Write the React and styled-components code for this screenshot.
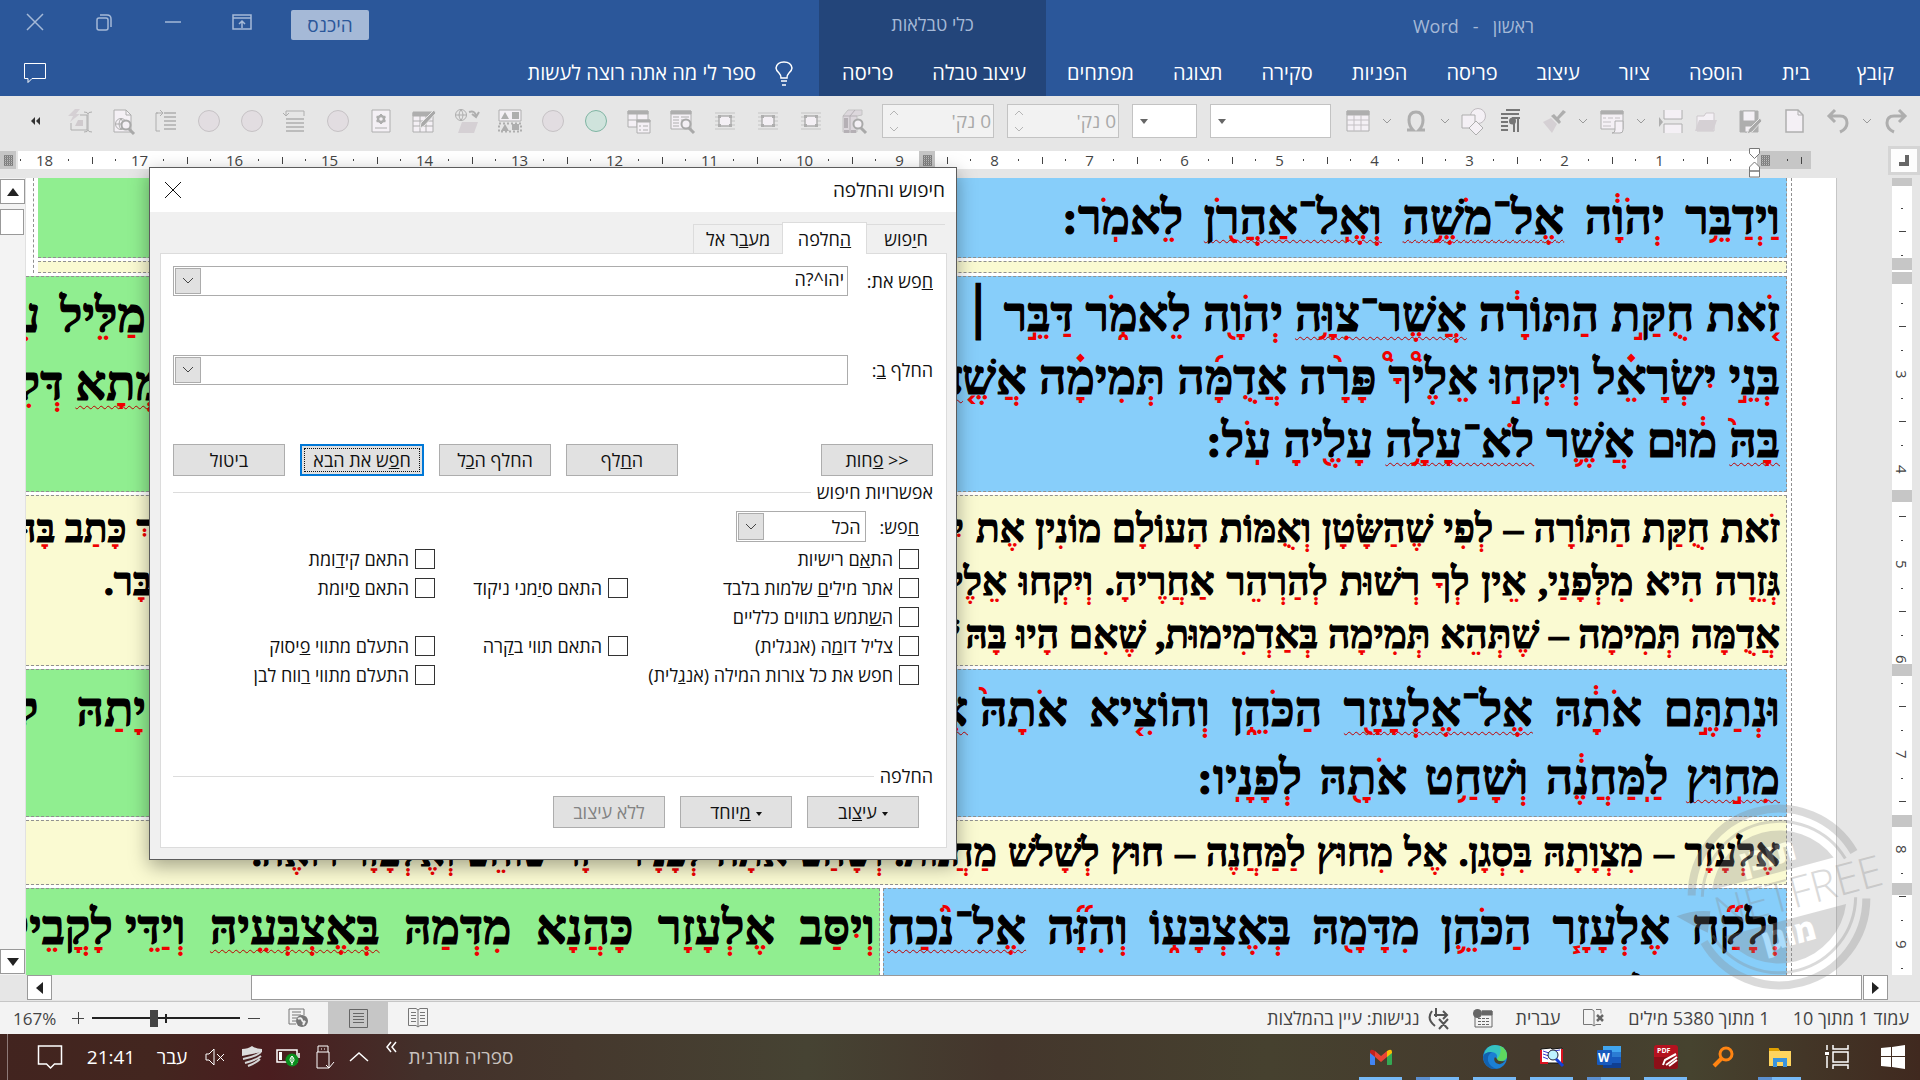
import React from 'react';
import styled, { createGlobalStyle, css } from 'styled-components';

const ui = '"Open Sans", "Noto Sans", sans-serif';
const scripture = '"Liberation Serif", serif';

const GlobalStyle = createGlobalStyle`
  * { box-sizing: border-box; }
  html, body { margin: 0; height: 100%; overflow: hidden; }
  body { font-family: ${ui}; background: #e6e6e6; }
  button, input, select { font: inherit; color: inherit; margin: 0; }
  svg { display: block; flex: none; overflow: visible; direction: ltr; }
`;

const Shell = styled.div`
  height: 100vh;
  display: flex;
  flex-direction: column;
`;

const PlainButton = styled.button`
  border: 0;
  padding: 0;
  background: none;
  display: flex;
  align-items: center;
  justify-content: center;
`;

/* ---------- title bar and ribbon tabs ---------- */

const Header = styled.header`
  direction: rtl;
  display: grid;
  grid-template-columns: 874fr 227fr 819fr;
  background: #2b579a;
  color: #fff;
`;

const HeaderColumn = styled.div`
  display: grid;
  grid-template-rows: 48px 48px;
  background: ${(p) => (p.$dark ? '#23457a' : 'transparent')};
`;

const Title = styled.div`
  display: flex;
  align-items: center;
  justify-content: ${(p) => (p.$center ? 'center' : 'flex-start')};
  padding-top: ${(p) => (p.$center ? 0 : 4)}px;
  padding-right: ${(p) => (p.$center ? 0 : 386)}px;
  font-size: 18px;
  white-space: pre;
  color: #a5b9d7;
`;

const Tabs = styled.nav`
  display: flex;
  align-items: center;
  gap: 39px;
  padding: 2px ${(p) => p.$inset}px 0 0;
`;

const TabLink = styled.a`
  padding-left: ${(p) => (p.$file ? 8 : 0)}px;
  color: #fff;
  text-decoration: none;
  font-size: 20px;
  line-height: 28px;
  white-space: nowrap;
`;

const WindowControls = styled.div`
  direction: ltr;
  display: flex;
  align-items: center;
  padding: 0 0 4px;
  color: #a5b9d7;
`;

const WindowButton = styled(PlainButton)`
  width: 69px;
  height: 44px;
`;

const SignIn = styled.button`
  margin: 6px 0 0 15px;
  width: 78px;
  height: 30px;
  border: 0;
  border-radius: 2px;
  padding: 0;
  background: #a5b9d7;
  color: #2b579a;
  font-size: 19px;
  line-height: 28px;
`;

const TellMe = styled.div`
  display: flex;
  align-items: center;
  justify-content: space-between;
  padding: 2px 26px 0 24px;
`;

const TellMeButton = styled(PlainButton)`
  gap: 19px;
  color: #fff;
  font-size: 20px;
  line-height: 28px;
`;

/* ---------- quick access toolbar ---------- */

const Toolbar = styled.div`
  height: 50px;
  display: flex;
  align-items: center;
  padding-right: 10px;
  flex: none;
  color: #aeaeae;
`;

const MoreButton = styled(PlainButton)`
  width: 58px;
  padding-left: 14px;
  color: #444;
`;

const ToolButton = styled(PlainButton)`
  width: 43px;
  height: 34px;
`;

const Fields = styled.div`
  display: flex;
  gap: 13px;
  margin-left: 7px;
`;

const Spinner = styled.label`
  width: 112px;
  height: 34px;
  border: 1px solid #c3c3c3;
  background: #f2f2f2;
  display: flex;
  align-items: center;
  padding: 0 2px 0 6px;
`;

const SpinnerInput = styled.input`
  flex: 1;
  min-width: 0;
  border: 0;
  padding: 0;
  background: none;
  direction: rtl;
  font-size: 19px;
  color: #a9a9a9;
`;

const ComboBox = styled.button`
  width: ${(p) => p.$w}px;
  height: 34px;
  border: 1px solid #c3c3c3;
  background: #fff;
  display: flex;
  align-items: center;
  padding: 0 0 0 7px;
`;

const Commands = styled.div`
  flex: 1;
  display: flex;
  align-items: center;
  gap: 8px;
  justify-content: flex-end;
`;

const Command = styled(PlainButton)`
  width: ${(p) => (p.$arrow ? 14 : 28)}px;
  height: 34px;
  margin-left: ${(p) => (p.$wide ? 8 : 0)}px;
`;

/* ---------- rulers ---------- */

const RulerRow = styled.div`
  height: 32px;
  display: flex;
  justify-content: space-between;
  flex: none;
`;

const Ruler = styled.div`
  direction: rtl;
  flex: 1;
  height: 18px;
  margin: 5px 77px 0 2px;
  display: flex;
  overflow: hidden;
  background: #fff;
  font-size: 15px;
  line-height: 18px;
  color: #444;
`;

const Hatch = styled.div`
  width: 16px;
  height: 18px;
  margin-top: ${(p) => (p.$flush ? 0 : 5)}px;
  justify-self: start;
  flex: none;
  display: flex;
  align-items: center;
  justify-content: center;
  background: #c6c6c6;
  &::before {
    content: '';
    width: 9px;
    height: 11px;
    background: repeating-linear-gradient(#8a8a8a 0 1px, transparent 1px 2px),
      repeating-linear-gradient(90deg, #777 0 1px, #bbb 1px 2px);
  }
`;

const RulerEnd = styled.div`
  width: 54px;
  flex: none;
  background: #c6c6c6;
  display: flex;
  align-items: center;
  justify-content: space-between;
  padding: 0 9px 0 0;
`;

const RulerStart = styled.div`
  width: 38px;
  flex: none;
  display: flex;
  align-items: center;
  padding-right: 26px;
`;

const RulerCell = styled.div`
  width: 95px;
  flex: none;
  display: grid;
  grid-template-columns: repeat(4, 1fr);
  align-items: center;
  justify-items: center;
`;

const Tick = styled.i`
  width: 1px;
  height: ${(p) => (p.$long ? 7 : 2)}px;
  background: #444;
`;

const IndentMarker = styled.div`
  position: absolute;
  right: 160px;
  top: 148px;
`;

const TabSelector = styled(PlainButton)`
  width: 32px;
  height: 29px;
  border: 3px solid #d5d5d5;
  background: #fdfdfd;
`;

/* ---------- document window ---------- */

const Workspace = styled.main`
  flex: 1;
  min-height: 0;
  display: flex;
`;

const VScroll = styled.div`
  width: 26px;
  display: flex;
  flex-direction: column;
  padding: 1px 1px 1px 0;
  background: #f3f3f3;
  border-right: 1px solid #e1e1e1;
`;

const ScrollButton = styled(PlainButton)`
  width: 25px;
  height: 25px;
  flex: none;
  border: 1px solid #999;
  background: #fff;
  color: #222;
`;

const VThumb = styled.div`
  height: 26px;
  margin: 5px 0 auto;
  border: 1px solid #999;
  background: #fff;
`;

const Page = styled.div`
  flex: 1;
  min-width: 0;
  direction: rtl;
  overflow: hidden;
  background: #fff;
  padding-right: 44px;
  border-right: 1px solid #c6c6c6;
`;

const OuterTable = styled.div`
  display: flex;
  flex-direction: column;
  gap: 3px;
  border-right: 1px dashed #909090;
  padding-right: 4px;
`;

const NestedTable = styled.div`
  display: flex;
  flex-direction: column;
  gap: 3px;
  margin-left: 7px;
  padding-left: 4px;
  border-left: 1px dashed #909090;
`;

const TableRow = styled.div`
  display: flex;
  gap: 3px;
`;

const fills = { blue: '#87cefa', green: '#90ee90', yellow: '#fafad2' };

const Cell = styled.div`
  ${(p) => (p.$first ? 'width: 904px; flex: none;' : 'flex: 1; min-width: 0;')}
  background: ${(p) => fills[p.$fill]};
  border: 1px dashed #909090;
  border-left-width: ${(p) => (p.$first ? 1 : 0)}px;
  border-top-width: ${(p) => (p.$open ? 0 : 1)}px;
  padding: ${(p) => p.$pad[0]}px ${(p) => (p.$fill === 'green' ? 4 : 6)}px ${(p) => p.$pad[1]}px 0;
  overflow: hidden;
  font-family: ${scripture};
  font-weight: 700;
  font-size: ${(p) => (p.$fill === 'yellow' ? 39 : 48)}px;
  line-height: ${(p) => p.$lh || 63}px;
`;

const Line = styled.div`
  display: flex;
  white-space: nowrap;
  gap: 12px;
`;

const Run = styled.div`
  flex: none;
  ${(p) =>
    p.$w &&
    css`
      width: ${p.$w}px;
      text-align-last: justify;
    `}
  ${(p) =>
    p.$tail !== undefined &&
    css`
      margin-right: auto;
      margin-left: ${p.$tail}px;
    `}
`;

const PointedWord = styled.span`
  position: relative;
  display: inline-block;
  color: #f00000;
  ${(p) =>
    p.$flag &&
    css`
      text-decoration: underline wavy #c00000 1px;
      text-decoration-skip-ink: none;
      text-underline-offset: 5px;
    `}
  &::after {
    content: attr(data-letters);
    position: absolute;
    inset: 0;
    color: #000;
    -webkit-text-stroke: 1px #000;
  }
`;

/* Letters keep dagesh, shin dots and full holam; every other point is drawn in red. */
const lettersOnly = (word) =>
  word
    .replace(/ו\u05B9/g, 'ו@')
    .replace(/[\u0591-\u05BB\u05BD\u05BF\u05C4\u05C5\u05C7]/g, '')
    .replace(/@/g, '\u05B9');

function Text({ children, w, tail }) {
  return (
    <Run $w={w} $tail={tail}>
      {children.split(' ').map((raw, i) => {
        const flag = raw.startsWith('~');
        const word = flag ? raw.slice(1) : raw;
        return (
          <React.Fragment key={i}>
            {i > 0 && ' '}
            <PointedWord $flag={flag} data-letters={lettersOnly(word)}>
              {word}
            </PointedWord>
          </React.Fragment>
        );
      })}
    </Run>
  );
}

const Margin = styled.aside`
  width: 83px;
  display: flex;
  padding-left: 55px;
  background: #e6e6e6;
`;

const VRuler = styled.div`
  position: relative;
  width: 20px;
  overflow: hidden;
  background: #fff;
  font-size: 15px;
  color: #444;
`;

const VRulerCell = styled.div`
  height: ${(p) => (p.$start ? 42 : 95)}px;
  display: grid;
  grid-template-rows: ${(p) => (p.$start ? '18px 24px' : 'repeat(4, 1fr)')};
  align-items: center;
  justify-items: center;
`;

const VNumber = styled.span`
  writing-mode: vertical-rl;
  line-height: 18px;
`;

const VTick = styled.i`
  height: 1px;
  width: ${(p) => (p.$long ? 7 : 2)}px;
  background: #444;
`;

const RowMarker = styled.i`
  position: absolute;
  left: 0;
  right: 0;
  top: ${(p) => p.$y}px;
  height: 12px;
  background: #c6c6c6;
`;

const HScroll = styled.div`
  height: 26px;
  flex: none;
  display: flex;
  padding: 0 32px 1px 27px;
`;

const HTrack = styled.div`
  flex: 1;
  padding: 0 1px 0 199px;
  background: #f0f0f0;
`;

const HThumb = styled.div`
  height: 25px;
  border: 1px solid #999;
  background: #fff;
`;

/* ---------- status bar ---------- */

const StatusBar = styled.footer`
  height: 33px;
  flex: none;
  display: flex;
  justify-content: space-between;
  border-top: 1px solid #c6c6c6;
  background: #f3f3f3;
  color: #444;
`;

const StatusGroup = styled.div`
  display: flex;
  align-items: center;
  direction: ${(p) => (p.$rtl ? 'rtl' : 'ltr')};
  font-size: ${(p) => (p.$rtl ? 18 : 17)}px;
  gap: ${(p) => (p.$rtl ? 23 : 0)}px;
  padding: ${(p) => (p.$rtl ? '0 11px 0 0' : '0 0 0 13px')};
  white-space: nowrap;
`;

const AccessNote = styled.span`
  display: flex;
  align-items: center;
  gap: 8px;
`;

const ZoomValue = styled.span`
  width: 54px;
`;

const ZoomStep = styled(PlainButton)`
  width: 22px;
  height: 32px;
`;

const ZoomSlider = styled.input`
  appearance: none;
  width: 154px;
  height: 18px;
  background: linear-gradient(#222, #222) 3px 50% / 148px 2px no-repeat,
    linear-gradient(#222, #222) 76px 50% / 2px 9px no-repeat;
  &::-webkit-slider-thumb {
    appearance: none;
    width: 8px;
    height: 17px;
    background: #444;
  }
`;

const Views = styled.div`
  display: flex;
  margin-left: 3px;
`;

const ViewButton = styled(PlainButton)`
  width: 60px;
  height: 32px;
  background: ${(p) => (p.$on ? '#c6c6c6' : 'transparent')};
`;

/* ---------- task bar ---------- */

const TaskBar = styled.footer`
  height: 46px;
  flex: none;
  display: flex;
  justify-content: space-between;
  background: linear-gradient(90deg, #42241f 0, #43261f 8%, #4a1d1f 14%, #43302a 22%, #45382d 30%, #464333 42%, #44362c 52%, #46412f 66%, #453a2d 80%, #46432f 88%, #40291f 100%);
  color: #fff;
`;

const Tray = styled.div`
  display: flex;
  align-items: center;
  margin-left: 7px;
  padding-left: 30px;
  border-left: 1px solid #8d7a78;
  font-size: 19px;
`;

const TraySlot = styled(PlainButton)`
  width: ${(p) => p.$w}px;
  height: 46px;
  color: ${(p) => (p.$dim ? '#c9c2bf' : '#fff')};
  align-items: ${(p) => (p.$top ? 'flex-start' : 'center')};
  padding-top: ${(p) => (p.$top ? 8 : 0)}px;
  white-space: nowrap;
`;

const Apps = styled.div`
  display: flex;
  direction: rtl;
`;

const AppButton = styled(PlainButton)`
  width: ${(p) => (p.$start ? 55 : 57)}px;
  height: 46px;
  background: ${(p) =>
    p.$open
      ? `linear-gradient(90deg, ${p.$stack ? '#5b8fcf 14px' : '#76b9f6 14px'}, #76b9f6 14px) 50% 100% / 43px 3px no-repeat`
      : 'none'};
`;

/* ---------- find and replace dialog ---------- */

const Dialog = styled.section`
  position: absolute;
  left: 149px;
  top: 167px;
  width: 808px;
  height: 693px;
  direction: rtl;
  display: flex;
  flex-direction: column;
  border: 1px solid #5c5c5c;
  background: #f0f0f0;
  box-shadow: 0 6px 18px rgba(0, 0, 0, 0.35);
  font-size: 18px;
  line-height: 24px;
  color: #111;
`;

const DialogTitle = styled.header`
  height: 44px;
  flex: none;
  display: flex;
  align-items: center;
  justify-content: space-between;
  padding: 0 11px 0 15px;
  background: #fff;
  font-size: 19px;
`;

const DialogTabs = styled.div`
  display: flex;
  align-items: flex-end;
  height: 41px;
  flex: none;
  padding-right: 11px;
`;

const DialogTab = styled.button`
  height: ${(p) => (p.$on ? 32 : 29)}px;
  width: ${(p) => p.$w}px;
  margin-bottom: ${(p) => (p.$on ? -1 : 0)}px;
  padding: 0;
  position: relative;
  border: 1px solid #dcdcdc;
  border-width: ${(p) => (p.$on ? '1px 1px 0' : p.$last ? '1px 0 0 1px' : '1px 0 0')};
  background: ${(p) => (p.$on ? '#fff' : '#f0f0f0')};
`;

const Pane = styled.div`
  flex: 1;
  margin: 0 9px 11px 10px;
  padding: 12px 13px 0 12px;
  border: 1px solid #dcdcdc;
  background: #fff;
  display: flex;
  flex-direction: column;
`;

const Field = styled.div`
  display: flex;
  align-items: center;
  justify-content: space-between;
  margin-bottom: 59px;
`;

const Combo = styled.div`
  width: ${(p) => p.$w}px;
  height: ${(p) => (p.$tall ? 31 : 30)}px;
  display: flex;
  align-items: stretch;
  border: 1px solid #acacac;
  padding: 1px;
  background: #fff;
`;

const ComboInput = styled.input`
  flex: 1;
  min-width: 0;
  border: 0;
  outline: 0;
  padding: 0 2px 4px;
  background: #fff;
`;

const ComboSelect = styled.select`
  flex: 1;
  min-width: 0;
  appearance: none;
  border: 0;
  outline: 0;
  padding: 0 3px;
  background: #fff;
`;

const ComboArrow = styled(PlainButton)`
  width: 26px;
  border: 1px solid #acacac;
  background: #e1e1e1;
`;

const Buttons = styled.div`
  display: flex;
  gap: 15px;
  margin-top: ${(p) => p.$before || 0}px;
  padding-right: ${(p) => p.$inset || 0}px;
`;

const DialogButton = styled.button`
  width: ${(p) => (p.$default ? 124 : 112)}px;
  height: 32px;
  padding: 0;
  border: ${(p) => (p.$default ? '2px solid #0078d7' : '1px solid #adadad')};
  background: #e1e1e1;
  margin-left: ${(p) => (p.$apart ? 'auto' : 0)};
  &:disabled {
    color: #838383;
  }
`;

const FocusRing = styled.span`
  display: block;
  margin: 2px;
  border: 1px dotted #111;
  line-height: 22px;
`;

const Caret = styled.span`
  display: inline-block;
  margin-left: 5px;
  vertical-align: middle;
  border: 3px solid transparent;
  border-top: 4px solid #111;
  border-bottom: 0;
`;

const Legend = styled.div`
  display: flex;
  align-items: center;
  gap: 6px;
  margin-top: ${(p) => p.$before}px;
  &::after {
    content: '';
    flex: 1;
    border-top: 1px solid #dcdcdc;
  }
`;

const SearchScope = styled.div`
  display: flex;
  align-items: center;
  gap: 14px;
  margin: 7px 14px 2px 0;
`;

const Options = styled.div`
  display: grid;
  grid-template-columns: 291px 193px 1fr;
  grid-auto-rows: 29px;
  padding-right: 14px;
`;

const Option = styled.label`
  grid-column: ${(p) => p.$col};
  grid-row: ${(p) => p.$row};
  display: flex;
  align-items: center;
  gap: 6px;
  white-space: nowrap;
`;

const CheckBox = styled.input`
  appearance: none;
  width: 20px;
  height: 20px;
  flex: none;
  margin: 0;
  border: 1px solid #333;
  background: #fff;
`;

/* ---------- drawings ---------- */

const Watermark = styled.div`
  position: absolute;
  right: 15px;
  bottom: 93px;
  pointer-events: none;
`;

const lite = '#f4f0f5';
const Svg = ({ w = 24, h = 24, children, ...rest }) => (
  <svg width={w} height={h} viewBox={`0 0 ${w} ${h}`} fill="none" stroke="#aeaeae" strokeWidth="1" aria-hidden="true" {...rest}>
    {children}
  </svg>
);

const CircleIcon = ({ green }) => (
  <Svg>
    <circle cx="12" cy="12" r="10.500" fill={green ? '#cfe3dc' : '#e2dde1'} stroke={green ? '#7fb5a3' : '#c6c2c5'} />
  </Svg>
);
const MagnifyPart = ({ x, y }) => (
  <g strokeWidth="2">
    <circle cx={x} cy={y} r="4.500" fill={lite} stroke="#a9a9a9" />
    <path d={`M${x + 3} ${y + 4}l5 5`} stroke="#a9a9a9" strokeWidth="3" />
  </g>
);

const icons = {
  rename: (
    <Svg>
      <path d="M7 0h5l-4 5h4L2 13l3-6H0z" fill="#d5d0d4" stroke="none" />
      <path d="M3 14v7h16V6h-7" />
      <path d="M7 17l3-6h5v6z" fill="#cfcacd" stroke="none" />
      <path d="M16 3q4 0 4 2v16q0 2-4 2M24 3q-4 0-4 2M24 23q-4 0-4-2" />
    </Svg>
  ),
  docGlobe: (
    <Svg>
      <path d="M3 1h12l5 5v17H3z" fill={lite} />
      <path d="M15 1v5h5" />
      <circle cx="10" cy="15" r="5.500" />
      <path d="M4.500 15h11M10 9.500q-4 5.500 0 11M10 9.500q4 5.500 0 11" />
      <MagnifyPart x={15} y={16} />
    </Svg>
  ),
  indentTop: (
    <Svg>
      <path d="M4 4H2v18h4M2 4h6M6 1l3 3-3 3" />
      <path d="M10 4h12M10 8h12M10 12h12M10 16h12M10 20h12" strokeWidth="1.500" />
    </Svg>
  ),
  indentBack: (
    <Svg>
      <path d="M21 7V2H3v5M0 4l3 3 3-3" />
      <path d="M3 10h18M3 14h18M3 18h18M3 22h18" strokeWidth="1.500" />
    </Svg>
  ),
  docGear: (
    <Svg>
      <path d="M3 1h18v22H3z" fill={lite} />
      <circle cx="12" cy="10" r="3" strokeWidth="2.500" />
      <path d="M12 5v2M12 13v2M7.500 7.500l2 1M14.500 11.500l2 1M7.500 12.500l2-1M14.500 8.500l2-1" strokeWidth="2" />
      <path d="M6 19h12" />
    </Svg>
  ),
  tablePen: (
    <Svg>
      <path d="M1 4h20v19H1z" fill={lite} />
      <path d="M1 3h20v4H1z" fill="#aeaeae" />
      <path d="M1 12h20M1 17h20M8 7v16M14 7v16" />
      <path d="M22 1l2 3L12 17l-4 2 1-5z" fill="#a9a9a9" stroke="#e6e6e6" />
    </Svg>
  ),
  folderGlobe: (
    <Svg>
      <circle cx="6" cy="6" r="5.500" />
      <path d="M.5 6h11M6 .5q-4 5.500 0 11M6 .5q4 5.500 0 11" />
      <path d="M14 3q6-2 7 4M24 3l-3 5-4-3" strokeWidth="2" />
      <path d="M3 24l4-11h16l-4 11z" fill="#d5d0d4" stroke="none" />
    </Svg>
  ),
  shapesGrid: (
    <Svg>
      <path d="M1 1h22v11H1z" fill={lite} />
      <path d="M7 3l4 7H3zM14 3h7v7h-7z" fill="#aeaeae" stroke="none" />
      <path d="M7 15l4 7H3zM14 15h7v6h-7z" fill="#aeaeae" stroke="none" />
      <path d="M1 14.500h22v8H1z" strokeDasharray="2 2" strokeWidth="2" />
    </Svg>
  ),
  forms: (
    <Svg>
      <path d="M1 2h20v16H1z" fill={lite} />
      <path d="M1 2h20v3H1z" fill="#aeaeae" />
      <path d="M1 11h9M10 5v13" />
      <path d="M10 11h13v13H10z" fill={lite} />
      <path d="M10 11h13v2H10z" fill="#aeaeae" />
      <path d="M12 17h2M16 17h5M12 21h2M16 21h5" />
    </Svg>
  ),
  docSearch: (
    <Svg>
      <path d="M1 2h20v18H1z" fill={lite} />
      <path d="M1 2h20v3H1z" fill="#aeaeae" />
      <path d="M3 8h6M3 11h6M3 14h6M3 17h6M11 8h8M11 11h4" />
      <MagnifyPart x={16} y={15} />
    </Svg>
  ),
  frame: (
    <Svg>
      <path d="M2 4h20M2 8h20M2 12h20M2 16h20M2 20h20" stroke="#c4c4c4" />
      <path d="M6 7h12v10H6z" fill={lite} strokeWidth="1.500" />
      <path d="M5 6h3v3H5zM16 6h3v3h-3zM5 15h3v3H5zM16 15h3v3h-3z" fill="#aeaeae" stroke="none" />
    </Svg>
  ),
  bookSearch: (
    <Svg>
      <path d="M1 7l5-6h14v5l-5 1v16H1z" fill="#dcd7dc" stroke="#c4c4c4" />
      <path d="M8 7v17M1 7h14M8 7l5-6" stroke="#b5b0b5" />
      <path d="M2 9h4v10H2zM2 21h5v3H2zM9 21h5v3H9z" fill="#b5b0b5" stroke="none" />
      <MagnifyPart x={16} y={15} />
    </Svg>
  ),
  grid: (
    <Svg>
      <path d="M1 2h22v20H1z" fill={lite} />
      <path d="M1 2h22v4H1z" fill="#aeaeae" />
      <path d="M1 11h22M1 16h22M8 6v16M15 6v16" stroke="#c4c0c4" />
    </Svg>
  ),
  omega: (
    <Svg>
      <path d="M3 21h6q-4-4-4-10 0-8 7-8t7 8q0 6-4 10h6" strokeWidth="3" />
    </Svg>
  ),
  shapes: (
    <Svg w={26} h={26}>
      <circle cx="17" cy="8" r="7.500" fill={lite} stroke="#c0bcc0" />
      <path d="M1 7h13v13H1z" fill={lite} />
      <path d="M15 13l7 7-7 7-7-7z" fill={lite} />
    </Svg>
  ),
  pilcrow: (
    <Svg stroke="#777">
      <path d="M8 1h14M3 5h18M3 9h7M3 13h7M3 17h7M3 21h7" strokeWidth="2" />
      <path d="M16 9v14M20 9v14M14 9h8" strokeWidth="2" />
      <circle cx="14.500" cy="12" r="3.500" fill="#777" stroke="none" />
    </Svg>
  ),
  brush: (
    <Svg>
      <path d="M1 13l8-4 6 6-5 9z" fill="#d5d0d4" stroke="none" />
      <path d="M9 7l8 8 2-2-2-3 7-7-3-2-6 7-3-3z" fill="#aeaeae" stroke="none" />
    </Svg>
  ),
  docList: (
    <Svg>
      <path d="M1 2h22v18H1z" fill={lite} />
      <path d="M1 2h22v3H1z" fill="#aeaeae" />
      <path d="M3 9h3M8 9h5M15 9h5M3 13h8M3 17h8" stroke="#c4c0c4" />
      <path d="M15 12h8v9q0 3-3 3h-8q3 0 3-3z" fill={lite} />
    </Svg>
  ),
  pageBreak: (
    <Svg>
      <path d="M6 1v9h18V1M6 24v-9h18v9" fill={lite} />
      <path d="M1 8l4 5-4 5z" fill="#aeaeae" stroke="none" />
    </Svg>
  ),
  folder: (
    <Svg>
      <path d="M3 22V7h7l2-3h8v18z" fill={lite} stroke="#cdc8cc" />
      <path d="M1 22l4-11h18l-4 11z" fill="#d5d0d4" stroke="none" />
    </Svg>
  ),
  savePen: (
    <Svg>
      <path d="M2 2h18v21H2z" fill="#aeaeae" />
      <path d="M5 2h12v10H5z" fill={lite} />
      <path d="M7 17h7v6H7z" fill={lite} />
      <path d="M22 9l2 3-10 11-5 2 2-5z" fill="#a9a9a9" stroke="#e6e6e6" />
    </Svg>
  ),
  doc: (
    <Svg>
      <path d="M4 1h12l5 5v17H4z" fill={lite} strokeWidth="1.500" />
      <path d="M16 1v5h5" />
    </Svg>
  ),
  undo: (
    <Svg>
      <path d="M3 7h11q7 0 7 7 0 6-7 9M9 1L3 7l6 6" strokeWidth="3" />
    </Svg>
  ),
  redo: (
    <Svg>
      <path d="M21 7H10q-7 0-7 7 0 6 7 9M15 1l6 6-6 6" strokeWidth="3" />
    </Svg>
  ),
  arrow: (
    <Svg w={8} h={5}>
      <path d="M0 0l4 4 4-4" stroke="#999" />
    </Svg>
  ),
};

const leftTools = ['rename', 'docGlobe', 'indentTop', 'circle', 'circle', 'indentBack', 'circle', 'docGear', 'tablePen', 'folderGlobe', 'shapesGrid', 'circle', 'green', 'forms', 'docSearch', 'frame', 'frame', 'frame', 'bookSearch'];
const rightTools = ['grid', 'arrow', 'omega', 'arrow', 'shapes', 'pilcrow', 'brush', 'arrow', 'docList', 'arrow', 'pageBreak', 'folder', 'savePen', 'doc', 'undo', 'arrow', 'redo'];
const spaced = new Set(['brush', 'savePen', 'doc', 'undo']);

const DropArrow = () => (
  <Svg w={8} h={5} stroke="none" fill="#666">
    <path d="M0 0h8L4 5z" />
  </Svg>
);
const ChevronDown = () => (
  <Svg w={10} h={6} stroke="#444">
    <path d="M0 0l5 5 5-5" />
  </Svg>
);

const tabs = ['קובץ', 'בית', 'הוספה', 'ציור', 'עיצוב', 'פריסה', 'הפניות', 'סקירה', 'תצוגה', 'מפתחים'];

function AppHeader() {
  return (
    <Header>
      <HeaderColumn>
        <Title>{'ראשון   -   Word'}</Title>
        <Tabs $inset={26}>
          {tabs.map((t, i) => (
            <TabLink key={t} href="#" $file={i === 0}>{t}</TabLink>
          ))}
        </Tabs>
      </HeaderColumn>
      <HeaderColumn $dark>
        <Title $center>כלי טבלאות</Title>
        <Tabs $inset={20}>
          <TabLink href="#">עיצוב טבלה</TabLink>
          <TabLink href="#">פריסה</TabLink>
        </Tabs>
      </HeaderColumn>
      <HeaderColumn>
        <WindowControls>
          <WindowButton aria-label="סגור">
            <Svg w={16} h={16} stroke="#a5b9d7" strokeWidth="1.500"><path d="M0 0l16 16M16 0L0 16" /></Svg>
          </WindowButton>
          <WindowButton aria-label="שחזר">
            <Svg w={16} h={16} stroke="#a5b9d7" strokeWidth="1.500"><rect x="1" y="4" width="11" height="12" rx="2" /><path d="M4 1h7q4 0 4 4v8" /></Svg>
          </WindowButton>
          <WindowButton aria-label="מזער">
            <Svg w={16} h={16} stroke="#a5b9d7" strokeWidth="1.500"><path d="M0 8h16" /></Svg>
          </WindowButton>
          <WindowButton aria-label="אפשרויות תצוגה">
            <Svg w={20} h={16} stroke="#a5b9d7" strokeWidth="1.500"><path d="M1 1h18v14H1zM1 4h18M10 14V7M7 10l3-3 3 3" /></Svg>
          </WindowButton>
          <SignIn>היכנס</SignIn>
        </WindowControls>
        <TellMe>
          <TellMeButton>
            <Svg w={18} h={25} stroke="#fff" strokeWidth="1.500">
              <path d="M6 17q0-3-2-5-3-3-3-5 1-6 8-6t8 6q0 2-3 5-2 2-2 5zM6 20h6M7 24h4" />
            </Svg>
            ספר לי מה אתה רוצה לעשות
          </TellMeButton>
          <PlainButton aria-label="הערות">
            <Svg w={22} h={20} stroke="#fff"><path d="M.5.5h21v15H8l-4 4v-4H.5z" /></Svg>
          </PlainButton>
        </TellMe>
      </HeaderColumn>
    </Header>
  );
}

function QuickAccess() {
  return (
    <Toolbar>
      <MoreButton aria-label="עוד">
        <Svg w={10} h={8} stroke="none" fill="#333"><path d="M4 0v8L0 4zM9 0v8L5 4z" /></Svg>
      </MoreButton>
      {leftTools.map((name, i) => (
        <ToolButton key={i} aria-label={name}>
          {icons[name] || <CircleIcon green={name === 'green'} />}
        </ToolButton>
      ))}
      <Fields>
        {[0, 1].map((i) => (
          <Spinner key={i}>
            <Svg w={10} h={22} stroke="#b5b5b5"><path d="M1 5l4-4 4 4M1 17l4 4 4-4" /></Svg>
            <SpinnerInput defaultValue="0 נק'" aria-label="מרווח" />
          </Spinner>
        ))}
        <ComboBox $w={65} aria-label="גודל"><DropArrow /></ComboBox>
        <ComboBox $w={121} aria-label="גופן"><DropArrow /></ComboBox>
      </Fields>
      <Commands>
        {rightTools.map((name, i) => (
          <Command key={i} $arrow={name === 'arrow'} $wide={spaced.has(name)} aria-label={name}>
            {icons[name]}
          </Command>
        ))}
      </Commands>
    </Toolbar>
  );
}

const range = (from, to) => Array.from({ length: to - from + 1 }, (_, i) => from + i);

function HorizontalRuler() {
  return (
    <RulerRow>
      <Hatch />
      <Ruler>
        <RulerEnd>
          <Tick $long />
          <Tick />
          <Hatch $flush />
        </RulerEnd>
        <RulerStart><Tick /></RulerStart>
        {range(1, 18).map((n) => (
          <RulerCell key={n}>
            <Tick $long />
            {n === 9 ? <Hatch $flush /> : <Tick />}
            <span>{n}</span>
            <Tick />
          </RulerCell>
        ))}
      </Ruler>
      <TabSelector aria-label="טאב">
        <Svg w={10} h={11} stroke="none" fill="#666"><path d="M6 0h4v11H0V7h6z" /></Svg>
      </TabSelector>
    </RulerRow>
  );
}

function VerticalRuler() {
  return (
    <VRuler>
      <VRulerCell $start><span /><VTick /></VRulerCell>
      {range(2, 9).map((n) => (
        <VRulerCell key={n}>
          <VTick $long />
          <VTick />
          {n === 2 ? <span /> : <VNumber>{n}</VNumber>}
          <VTick />
        </VRulerCell>
      ))}
      {[-4, 80, 94, 312, 486, 637, 705].map((y) => (
        <RowMarker key={y} $y={y} />
      ))}
    </VRuler>
  );
}

function Document() {
  return (
    <Page>
      <OuterTable>
        <NestedTable>
          <TableRow>
            <Cell $first $open $fill="blue" $pad={[8, 8]}>
              <Line><Text w={718}>וַיְדַבֵּ֥ר יְהֹוָ֔ה ~אֶל־מֹשֶׁ֥ה ~וְאֶֽל־אַהֲרֹ֖ן לֵאמֹֽר:</Text></Line>
            </Cell>
            <Cell $open $fill="green" $pad={[8, 8]} />
          </TableRow>
          <TableRow>
            <Cell $fill="yellow" $pad={[0, 10]} />
          </TableRow>
        </NestedTable>
        <TableRow>
          <Cell $first $fill="blue" $pad={[6, 18]}>
            <Line><Text w={808}>זֹ֚את חֻקַּ֣ת הַתּוֹרָ֔ה ~אֲשֶׁר־צִוָּ֥ה יְהֹוָ֖ה לֵאמֹ֑ר דַּבֵּ֣ר ׀</Text></Line>
            <Line><Text w={805}>בְּנֵ֣י יִשְׂרָאֵ֗ל וְיִקְח֣וּ אֵלֶ֩יךָ֩ פָּרָ֨ה אֲדֻמָּ֜ה תְּמִימָ֗ה אֲשֶׁ֤ר</Text><Text>~אֵין־</Text></Line>
            <Line><Text w={554}>~בָּהּ֙ מ֔וּם אֲשֶׁ֛ר ~לֹא־עָלָ֥ה עָלֶ֖יהָ עֹֽל:</Text></Line>
          </Cell>
          <Cell $fill="green" $pad={[5, 73]} $lh={68}>
            <Line><Text tail={-43} w={163}>מַלֵּיל עִם</Text></Line>
            <Line><Text tail={-50}>~שְׁלֶמְתָא דְּלֵית</Text></Line>
          </Cell>
        </TableRow>
        <TableRow>
          <Cell $fill="yellow" $pad={[6, 4]} $lh={53}>
            <Line>
              <Text w={804}>זֹאת חֻקַּת הַתּוֹרָה – לְפִי שֶׁהַשָּׂטָן וְאֻמּוֹת הָעוֹלָם מוֹנִין אֶת</Text>
              <Text>יִשְׂרָאֵל</Text>
              <Text tail={-12}>לְפִיכָךְ כָּתַב בָּהּ</Text>
            </Line>
            <Line>
              <Text w={761}>גְּזֵרָה הִיא מִלְּפָנַי, אֵין לְךָ רְשׁוּת לְהַרְהֵר אַחֲרֶיהָ. וְיִקְחוּ</Text>
              <Text>אֵלֶיךָ</Text>
              <Text tail={78}>בַּמִּדְבָּר.</Text>
            </Line>
            <Line>
              <Text w={809}>אֲדֻמָּה תְּמִימָה – שֶׁתְּהֵא תְּמִימָה בְּאַדְמִימוּת, שֶׁאִם הָיוּ בָּהּ</Text>
              <Text>שְׁתֵּי</Text>
            </Line>
          </Cell>
        </TableRow>
        <TableRow>
          <Cell $first $fill="blue" $pad={[6, 4]} $lh={68}>
            <Line><Text w={800}>וּנְתַתֶּ֣ם אֹתָ֔הּ ~אֶל־אֶלְעָזָ֖ר הַכֹּהֵ֑ן וְהוֹצִ֤יא אֹתָהּ֙</Text><Text>~אֶל־</Text></Line>
            <Line><Text w={583}>~מִח֣וּץ לַֽמַּחֲנֶ֔ה וְשָׁחַ֥ט אֹתָ֖הּ לְפָנָֽיו:</Text></Line>
          </Cell>
          <Cell $fill="green" $pad={[6, 4]} $lh={68}>
            <Line><Text tail={-10} w={130}>יָתַהּ ל</Text></Line>
          </Cell>
        </TableRow>
        <TableRow>
          <Cell $fill="yellow" $pad={[5, 5]} $lh={53}>
            <Line>
              <Text w={1528}>אֶלְעָזָר – מִצְוָתָהּ בִּסְגָן. אֶל מִחוּץ לַמַּחֲנֶה – חוּץ לְשָׁלֹשׁ מַחֲנוֹת. וְשָׁחַט אֹתָהּ לְפָנָיו – זָר שׁוֹחֵט וְאֶלְעָזָר רוֹאֶה.</Text>
            </Line>
          </Cell>
        </TableRow>
        <TableRow>
          <Cell $first $fill="blue" $pad={[5, 0]} $lh={68}>
            <Line><Text w={893}>וְלָקַ֞ח אֶלְעָזָ֧ר הַכֹּהֵ֛ן מִדָּמָ֖הּ בְּאֶצְבָּע֑וֹ וְהִזָּ֞ה ~אֶל־נֹ֨כַח</Text></Line>
            <Line><Text>פְּנֵי אֹהֶל־מוֹעֵד</Text></Line>
          </Cell>
          <Cell $fill="green" $pad={[5, 0]} $lh={68}>
            <Line><Text w={750}>וְיִסַּב אֶלְעָזָר כָּהֲנָא מִדְּמַהּ ~בְּאֶצְבְּעֵיהּ וְיַדֵּי</Text><Text>לָקֳבֵיל</Text></Line>
          </Cell>
        </TableRow>
      </OuterTable>
    </Page>
  );
}

const options = [
  [1, 1, <>הת<u>א</u>ם רישיות</>],
  [1, 3, <>התאם קי<u>ד</u>ומת</>],
  [2, 1, <>אתר מילי<u>ם</u> שלמות בלבד</>],
  [2, 2, <>התאם ס<u>י</u>מני ניקוד</>],
  [2, 3, <>התאם <u>ס</u>יומת</>],
  [3, 1, <>ה<u>ש</u>תמש בתווים כלליים</>],
  [4, 1, <>צליל דו<u>מ</u>ה (אנגלית)</>],
  [4, 2, <>התאם תווי ב<u>ק</u>רה</>],
  [4, 3, <>התעלם מתווי <u>פ</u>יסוק</>],
  [5, 1, <>חפש את כל צורות המילה (אנ<u>ג</u>לית)</>],
  [5, 3, <>התעלם מתווי <u>ר</u>ווח לבן</>],
];

function FindReplace() {
  return (
    <Dialog role="dialog" aria-label="חיפוש והחלפה">
      <DialogTitle>
        חיפוש והחלפה
        <PlainButton aria-label="סגור">
          <Svg w={16} h={16} stroke="#111"><path d="M0 0l16 16M16 0L0 16" /></Svg>
        </PlainButton>
      </DialogTitle>
      <DialogTabs>
        <DialogTab $w={78}>ח<u>י</u>פוש</DialogTab>
        <DialogTab $w={85} $on><u>ה</u>חלפה</DialogTab>
        <DialogTab $w={89} $last>מע<u>ב</u>ר אל</DialogTab>
      </DialogTabs>
      <Pane>
        <Field>
          <label htmlFor="find"><u>ח</u>פש את:</label>
          <Combo $w={675}>
            <ComboInput id="find" defaultValue="יהו^?ה" />
            <ComboArrow aria-label="פתח"><ChevronDown /></ComboArrow>
          </Combo>
        </Field>
        <Field>
          <label htmlFor="replace">החלף <u>ב</u>:</label>
          <Combo $w={675}>
            <ComboInput id="replace" defaultValue="" />
            <ComboArrow aria-label="פתח"><ChevronDown /></ComboArrow>
          </Combo>
        </Field>
        <Buttons>
          <DialogButton $apart>&lt;&lt; <u>פ</u>חות</DialogButton>
          <DialogButton>ה<u>ח</u>לף</DialogButton>
          <DialogButton>החלף ה<u>כ</u>ל</DialogButton>
          <DialogButton $default><FocusRing>ח<u>פ</u>ש את הבא</FocusRing></DialogButton>
          <DialogButton>ביטול</DialogButton>
        </Buttons>
        <Legend $before={4}>אפשרויות חיפוש</Legend>
        <SearchScope>
          <label htmlFor="scope"><u>ח</u>פש:</label>
          <Combo $w={130} $tall>
            <ComboSelect id="scope"><option>הכל</option></ComboSelect>
            <ComboArrow as="span"><ChevronDown /></ComboArrow>
          </Combo>
        </SearchScope>
        <Options>
          {options.map(([row, col, label], i) => (
            <Option key={i} $row={row} $col={col}>
              <CheckBox type="checkbox" />
              <span>{label}</span>
            </Option>
          ))}
        </Options>
        <Legend $before={75}>החלפה</Legend>
        <Buttons $before={8} $inset={14}>
          <DialogButton><Caret />עי<u>צ</u>וב</DialogButton>
          <DialogButton><Caret /><u>מ</u>יוחד</DialogButton>
          <DialogButton disabled>ללא עיצוב</DialogButton>
        </Buttons>
      </Pane>
    </Dialog>
  );
}

function Status() {
  return (
    <StatusBar>
      <StatusGroup>
        <ZoomValue>167%</ZoomValue>
        <ZoomStep aria-label="הגדל"><Svg w={12} h={12} stroke="#444"><path d="M0 6.500h12M6.500 0v12" /></Svg></ZoomStep>
        <ZoomSlider type="range" min="0" max="100" defaultValue="42" aria-label="זום" />
        <ZoomStep aria-label="הקטן"><Svg w={12} h={12} stroke="#444"><path d="M0 6.500h12" /></Svg></ZoomStep>
        <Views>
          <ViewButton aria-label="פריסת אינטרנט">
            <Svg w={20} h={20} stroke="#777"><path d="M16 7V1H1v15h7M4 4h9M4 7h9M4 10h5M4 13h4" /><circle cx="14" cy="13" r="6" fill="#777" stroke="none" /><path d="M10 11q3-2 4 1t3 1l-2 4" stroke="#eee" strokeWidth="2" /></Svg>
          </ViewButton>
          <ViewButton $on aria-label="פריסת הדפסה">
            <Svg w={19} h={19} stroke="#666"><path d="M.5.5h18v18H.5zM4 4.500h11M4 7.500h11M4 10.500h11M4 13.500h11" /></Svg>
          </ViewButton>
          <ViewButton aria-label="קריאה">
            <Svg w={20} h={20} stroke="#777"><path d="M10 2L8 .5H.5v17H8l2 1.500 2-1.500h7.500V.5H12zM10 2v17M3 4.500h5M3 7.500h5M3 10.500h5M3 13.500h5M12 4.500h5M12 7.500h5M12 10.500h5M12 13.500h5" /></Svg>
          </ViewButton>
        </Views>
      </StatusGroup>
      <StatusGroup $rtl>
        <span>עמוד 1 מתוך 10</span>
        <span>1 מתוך 5380 מילים</span>
        <Svg w={22} h={18} stroke="#777"><path d="M11 2L9 .5H.5v15H9l2 1.500 2-1.500h5M11 2v15M13 .5h5v4" /><path d="M14 6l6 6M20 6l-6 6" strokeWidth="2.500" stroke="#666" /></Svg>
        <span>עברית</span>
        <Svg w={20} h={19} stroke="#666"><path d="M2 5v13h17V2H9" /><path d="M9 2h10v4H9z" fill="#666" /><circle cx="4.500" cy="4.500" r="4.500" fill="#666" stroke="none" /><path d="M5 9.500h12M5 12.500h12M5 15.500h12" strokeDasharray="3 1" /></Svg>
        <AccessNote>
          <Svg w={22} h={22} stroke="#555" strokeWidth="2"><path d="M8 1v9M6 8h13M15 4l4 4-4 4M4 4q-6 8 3 15M11 12l9 10M20 12l-9 10" /></Svg>
          <span>נגישות: עיין בהמלצות</span>
        </AccessNote>
      </StatusGroup>
    </StatusBar>
  );
}

const WindowsLogo = () => (
  <Svg w={24} h={24} stroke="none" fill="#fff"><path d="M0 3l10-1v9H0zM11 2l13-2v11H11zM0 12h10v10L0 21zM11 12h13v12l-13-2z" /></Svg>
);

const appIcons = [
  { name: 'start', start: true, icon: <WindowsLogo /> },
  { name: 'tasks', icon: <Svg w={24} h={24} stroke="#fff" strokeWidth="1.500"><path d="M2 0v5M2 11v12M8 0v4h15V0M8 24v-4h15v4M8 7h15v10H8z" /><path d="M0 7h4v3H0z" fill="#fff" stroke="none" /></Svg> },
  { name: 'explorer', open: true, stack: true, icon: <Svg w={24} h={20} stroke="none"><path d="M1 1h9l2 3h11v15H1z" fill="#ffd45e" /><path d="M1 1h9l2 3H1z" fill="#e0a000" /><path d="M5 20v-9h14v9h-4v-5H9v5z" fill="#3a93dd" /></Svg> },
  { name: 'search', icon: <Svg w={22} h={22} stroke="#ff8412"><circle cx="14" cy="8" r="6" strokeWidth="3" /><path d="M10 12l-8 8" strokeWidth="4" /></Svg> },
  { name: 'pdf', open: true, icon: <Svg w={24} h={24} stroke="none"><rect width="24" height="24" rx="3" fill="#b5121f" /><path d="M0 12h24v9q0 3-3 3H3q-3 0-3-3z" fill="#8d0f18" /><text x="3" y="8" fontSize="7" fontWeight="700" fontFamily="Open Sans" fill="#fff">PDF</text><path d="M9 20l2-5 11-6M12 20l11-8M15 21l8-6" stroke="#fff" strokeWidth="2" /></Svg> },
  { name: 'word', open: true, stack: true, icon: <Svg w={24} h={22} stroke="none"><rect x="6" width="18" height="22" rx="1" fill="#185abd" /><path d="M6 0h18v6H6z" fill="#41a5ee" /><path d="M6 6h18v5H6z" fill="#2b7cd3" /><path d="M6 17h18v5H6z" fill="#103f91" /><rect y="4" width="15" height="15" rx="1" fill="#185abd" /><text x="1" y="16" fontSize="12" fontWeight="700" fontFamily="Open Sans" fill="#fff">W</text></Svg> },
  { name: 'library', open: true, icon: <Svg w={24} h={22} stroke="none"><path d="M1 3l10-1 1 1 10-1v15H1z" fill="#fff" stroke="#111" /><path d="M1 4v13h7M22 3v14" stroke="#d8121f" strokeWidth="2" /><path d="M3 5l6 2M3 8l6 2M3 11l5 2M14 5l6-1" stroke="#3a3ad0" /><circle cx="13" cy="9" r="5" fill="#bff3ff" stroke="#223" /><path d="M16 13l7 7" stroke="#1540d8" strokeWidth="3" /></Svg> },
  { name: 'edge', open: true, icon: <Svg w={24} h={24} stroke="none"><circle cx="12" cy="12" r="12" fill="#1b7fd4" /><path d="M1 10Q3 0 12 0q11 0 12 10 0 6-7 6-4 0-3-3 1-5-5-6-6 0-8 3z" fill="#36c3c0" /><path d="M17 1q7 3 7 10 0 5-7 5-3 0-3-2 5-5 3-13z" fill="#5fd95f" /><path d="M9 7q-5 3-4 9 2 6 9 8Q2 25 0 12q1-5 9-5z" fill="#1261b0" /><path d="M14 14q1 3 8 2-4 5-9 2-3-3-1-6z" fill="#45402f" /></Svg> },
  { name: 'blank', open: true, stack: true, icon: null },
  { name: 'gmail', open: true, icon: <Svg w={22} h={17} stroke="none"><path d="M0 3v12q0 1 1 1h4V6z" fill="#4285f4" /><path d="M22 3v12q0 1-1 1h-4V6z" fill="#34a853" /><path d="M5 2l6 5 6-5v6l-6 5-6-5z" fill="#ea4335" /><path d="M0 3q0-4 5-1v6L0 4z" fill="#c5221f" /><path d="M22 3q0-4-5-1v6l5-4z" fill="#fbbc04" /></Svg> },
];

function Tasks() {
  return (
    <TaskBar>
      <Tray>
        <TraySlot $w={24} aria-label="התראות"><Svg w={24} h={24} stroke="#fff" strokeWidth="1.500"><path d="M.5 1h23v18h-7l-4 4-4-4h-8z" /></Svg></TraySlot>
        <TraySlot $w={98}>21:41</TraySlot>
        <TraySlot $w={24}>עבר</TraySlot>
        <TraySlot $w={62} aria-label="עוצמה"><Svg w={20} h={18} stroke="#fff"><path d="M1 6h3l5-5v16l-5-5H1zM12 6l7 7M19 6l-7 7" /></Svg></TraySlot>
        <TraySlot $w={12} aria-label="הגנה"><Svg w={20} h={24} stroke="#d5d5d5" strokeWidth="3"><path d="M0 4q6 0 10-3 4 3 10 3v3L0 11z" fill="#ddd" stroke="none" /><path d="M1 14Q13 12 19 7M3 18q11-3 16-7M6 21q8-3 12-7" strokeWidth="2" /></Svg></TraySlot>
        <TraySlot $w={60} aria-label="סוללה"><Svg w={24} h={20} stroke="#fff" strokeWidth="1.500"><path d="M1 3h20v12H1zM23 6v5" /><path d="M3 5h3v8H3z" fill="#fff" stroke="none" /><circle cx="16" cy="13" r="6.500" fill="#0a8f1d" stroke="none" /><path d="M16 9q-4 4 0 7 4-3 0-7v9" stroke="#fff" strokeWidth="1" /></Svg></TraySlot>
        <TraySlot $w={14} aria-label="התקן"><Svg w={18} h={24} stroke="#fff"><path d="M1 7h12v16H1zM2 7V1h10v6M5 4h1M8 4h1M10 20l3 3 5-6" /></Svg></TraySlot>
        <TraySlot $w={54} aria-label="הצג סמלים"><Svg w={18} h={10} stroke="#fff" strokeWidth="1.500"><path d="M0 9l9-8 9 8" /></Svg></TraySlot>
        <TraySlot $w={10} $top aria-label="עוד"><Svg w={10} h={10} stroke="#fff" strokeWidth="1.500"><path d="M5 0L1 5l4 5M10 0L6 5l4 5" /></Svg></TraySlot>
        <TraySlot $w={130} $dim>ספריה תורנית</TraySlot>
      </Tray>
      <Apps>
        {appIcons.map((a) => (
          <AppButton key={a.name} $start={a.start} $open={a.open} $stack={a.stack} aria-label={a.name}>
            {a.icon}
          </AppButton>
        ))}
      </Apps>
    </TaskBar>
  );
}

function Stamp() {
  return (
    <Watermark>
      <svg width="210" height="180" viewBox="0 0 210 180" opacity="0.3" aria-hidden="true">
        <g transform="translate(84 90) rotate(-15)" fill="none" stroke="#888">
          <path d="M-84 -24A87 87 0 0 1 84 -24M-84 24A87 87 0 0 0 84 24" strokeWidth="8" />
          <path d="M-74 -20A77 77 0 0 1 74 -20M-74 20A77 77 0 0 0 74 20" strokeWidth="3" />
          <path d="M-63 -24A68 68 0 0 1 63 -24zM-63 24A68 68 0 0 0 63 24z" fill="#888" stroke="none" />
          <text x="0" y="-32" textAnchor="middle" fontFamily="Open Sans" fontWeight="800" fontSize="30" fill="#fff" stroke="none">תוכן</text>
          <text x="0" y="50" textAnchor="middle" fontFamily="Open Sans" fontWeight="800" fontSize="30" fill="#fff" stroke="none">מוגן</text>
          <text x="-66" y="15" fontFamily="Open Sans" fontWeight="300" fontSize="43" fill="#888" stroke="none">NETFREE</text>
          <path d="M-104 -8q18-2 34 4l-8 20q-12-10-26-24z" fill="#777" stroke="none" />
        </g>
      </svg>
    </Watermark>
  );
}

export default function App() {
  return (
    <Shell>
      <GlobalStyle />
      <AppHeader />
      <QuickAccess />
      <HorizontalRuler />
      <Workspace>
        <VScroll>
          <ScrollButton aria-label="למעלה"><Svg w={12} h={8} stroke="none" fill="#222"><path d="M6 0l6 8H0z" /></Svg></ScrollButton>
          <VThumb />
          <ScrollButton aria-label="למטה"><Svg w={12} h={8} stroke="none" fill="#222"><path d="M6 8l6-8H0z" /></Svg></ScrollButton>
        </VScroll>
        <Document />
        <Margin><VerticalRuler /></Margin>
      </Workspace>
      <HScroll>
        <ScrollButton aria-label="שמאלה"><Svg w={7} h={12} stroke="none" fill="#222"><path d="M7 0v12L0 6z" /></Svg></ScrollButton>
        <HTrack><HThumb /></HTrack>
        <ScrollButton aria-label="ימינה"><Svg w={7} h={12} stroke="none" fill="#222"><path d="M0 0v12l7-6z" /></Svg></ScrollButton>
      </HScroll>
      <Status />
      <Tasks />
      <IndentMarker>
        <Svg w={11} h={30} stroke="#777"><path d="M.5.5h10v5l-5 5-5-5zM5.500 14l5 5v4H.5v-4zM.5 23h10v6H.5z" fill="#fff" /></Svg>
      </IndentMarker>
      <FindReplace />
      <Stamp />
    </Shell>
  );
}
